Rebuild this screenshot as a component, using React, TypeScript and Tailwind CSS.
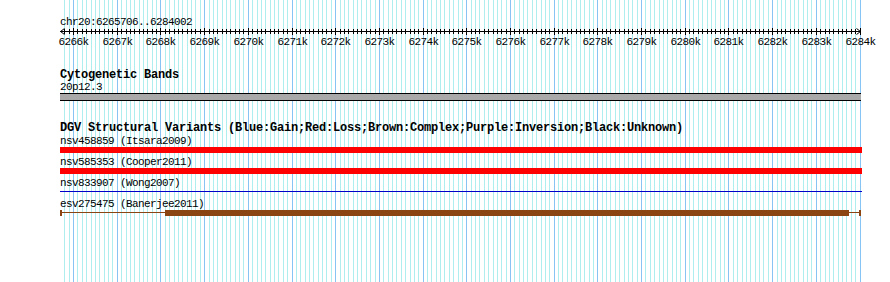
import React from 'react';

const START = 6265706;
const END = 6284002;
const px = (bp: number) => Math.floor(60.75 + (bp - START) * 0.04369);

const ticks: { x: number; major: boolean; kb: number }[] = [];
for (let bp = Math.ceil(START / 100) * 100; bp <= END; bp += 100) {
  ticks.push({ x: px(bp), major: bp % 1000 === 0, kb: bp / 1000 });
}

function Grid() {
  return (
    <svg className="absolute inset-0" width={890} height={282} shapeRendering="crispEdges">
      {ticks.map((t) => (
        <rect key={t.x} x={t.x} y={0} width={1} height={282} fill={t.major ? '#87c4f4' : '#aeeeee'} />
      ))}
    </svg>
  );
}

function Ruler() {
  // svg starts at page x 60, so local x = page x - 60
  return (
    <svg width={830} height={20} className="block overflow-visible">
      <g shapeRendering="crispEdges" fill="#000">
        <rect x={0} y={3} width={801} height={1} />
        {ticks.map((t) => (
          <rect key={t.x} x={t.x - 60} y={t.major ? 0 : 1} width={1} height={t.major ? 7 : 5} />
        ))}
      </g>
      <path d="M4.5 0.5 L0.5 3.5 L4.5 6.5 M796.5 0.5 L800.5 3.5 L796.5 6.5" stroke="#000" fill="none" strokeWidth={1} />
      {ticks
        .filter((t) => t.major)
        .map((t) => (
          <text
            key={t.kb}
            x={t.x - 60 + 0.5}
            y={17}
            textAnchor="middle"
            fontSize={11}
            letterSpacing={-0.6}
            fontFamily="'Liberation Mono', monospace"
            fill="#000"
          >
            {t.kb}k
          </text>
        ))}
    </svg>
  );
}

function Label({ children, className = '' }: { children: React.ReactNode; className?: string }) {
  return (
    <div className={`h-[12px] text-[11px] leading-[12px] tracking-[-0.6px] whitespace-nowrap ${className}`}>
      {children}
    </div>
  );
}

function Title({ children, className = '' }: { children: React.ReactNode; className?: string }) {
  return (
    <div className={`h-[12px] text-[12px] font-bold leading-[12px] tracking-[-0.2px] whitespace-nowrap ${className}`}>
      {children}
    </div>
  );
}

export default function App() {
  return (
    <div className="relative h-[282px] w-[890px] overflow-hidden bg-white font-['Liberation_Mono',monospace] text-black">
      <Grid />
      <div className="relative flex flex-col pl-[60px] pt-[16px]">
        <Label>chr20:6265706..6284002</Label>
        <Ruler />

        <Title className="mt-[21px]">Cytogenetic Bands</Title>
        <Label>20p12.3</Label>
        <div className="h-[8px] w-[801px] border-y border-black bg-[#a9a9a9]" />

        <Title className="mt-[21px]">
          DGV Structural Variants (Blue:Gain;Red:Loss;Brown:Complex;Purple:Inversion;Black:Unknown)
        </Title>
        <Label className="mt-[1px]">nsv458859 (Itsara2009)</Label>
        <div className="h-[6px] w-[802px] bg-[#ff0000]" />

        <Label className="mt-[3px]">nsv585353 (Cooper2011)</Label>
        <div className="h-[6px] w-[802px] bg-[#ff0000]" />

        <Label className="mt-[3px]">nsv833907 (Wong2007)</Label>
        <div className="mt-[2px] h-[1px] w-[802px] bg-[#0000c8]" />

        <Label className="mt-[6px]">esv275475 (Banerjee2011)</Label>
        <div className="flex h-[6px] w-[801px] items-start">
          <div className="h-[6px] w-[2px] bg-[#8b4513]" />
          <div className="mt-[2px] h-[1px] w-[103px] bg-[#8b4513]" />
          <div className="h-[6px] w-[684px] bg-[#8b4513]" />
          <div className="mt-[2px] h-[1px] w-[10px] bg-[#8b4513]" />
          <div className="h-[6px] w-[2px] bg-[#8b4513]" />
        </div>
      </div>
    </div>
  );
}
